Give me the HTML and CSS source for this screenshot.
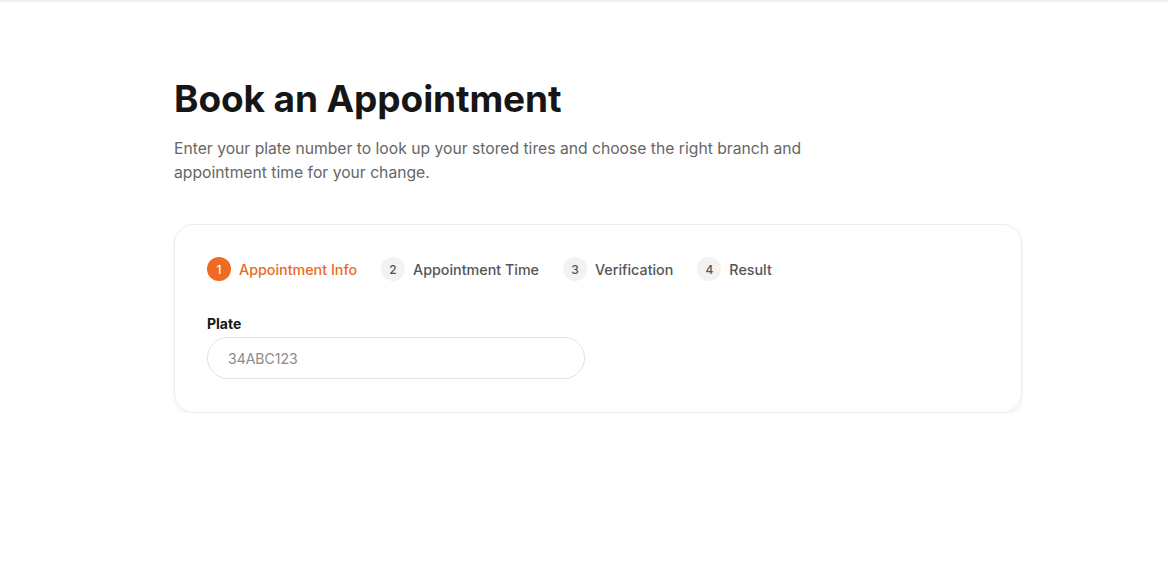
FILE: index.html
```html
<!DOCTYPE html>
<html lang="en">
<head>
    <meta charset="UTF-8">
    <meta name="viewport" content="width=device-width, initial-scale=1.0">
    <title>Book an Appointment</title>
    <link rel="stylesheet" href="styles.css">
</head>
<body>

    <div class="topline"></div>

    <main class="page">
        <h1 class="title">Book an Appointment</h1>
        <p class="intro">Enter your plate number to look up your stored tires and choose the right branch and appointment time for your change.</p>

        <section class="card">
            <ol class="steps">
                <li class="step active"><span class="step-num">1</span>Appointment Info</li>
                <li class="step"><span class="step-num">2</span>Appointment Time</li>
                <li class="step"><span class="step-num">3</span>Verification</li>
                <li class="step"><span class="step-num">4</span>Result</li>
            </ol>

            <label class="field-label" for="plate">Plate</label>
            <input class="field-input" id="plate" type="text" placeholder="34ABC123">
        </section>
    </main>

</body>
</html>
```

FILE: styles.css
```css
body, html {
    margin: 0;
    padding: 0;
    background: #fff;
    font-family: "Inter", "Noto Sans", sans-serif;
    color: #161616;
}
.topline {
    height: 2px;
    background-color: #f0f0f0;
}
.page {
    width: 848px;
    padding: 75px 0 0 174px;
}
.title {
    margin: 0;
    font-size: 37px;
    font-weight: 700;
    letter-spacing: -0.1px;
    line-height: 44px;
}
.intro {
    margin: 16px 0 0;
    max-width: 650px;
    font-size: 15.7px;
    line-height: 24px;
    color: #666;
}

/* tarjeta */
.card {
    margin-top: 39px;
    padding: 32px 32px 33px;
    border: 1px solid #ececec;
    border-radius: 20px;
    box-shadow: 0 2px 4px rgba(0, 0, 0, 0.06);
    display: flex;
    flex-direction: column;
    align-items: flex-start;
}
.steps {
    list-style: none;
    margin: 0;
    padding: 0;
    display: flex;
    gap: 24px;
}
.step {
    display: flex;
    align-items: center;
    gap: 8px;
    font-size: 14.3px;
    font-weight: 500;
    color: #555;
}
.step-num {
    width: 24px;
    height: 24px;
    border-radius: 50%;
    background-color: #f2f2f2;
    color: #555;
    font-size: 12px;
    display: flex;
    justify-content: center;
    align-items: center;
}
.step.active { color: #ec6a25; }
.step.active .step-num {
    background-color: #ef6a22;
    color: #fff;
}
.field-label {
    margin-top: 34px;
    font-size: 14px;
    font-weight: 700;
    line-height: 18px;
}
.field-input {
    margin-top: 4px;
    width: 378px;
    height: 42px;
    box-sizing: border-box;
    padding: 0 20px;
    border: 1px solid #e3e3e3;
    border-radius: 21px;
    font-family: inherit;
    font-size: 14px;
    color: #333;
    outline: none;
}
.field-input::placeholder { color: #8a8a8a; }
```
